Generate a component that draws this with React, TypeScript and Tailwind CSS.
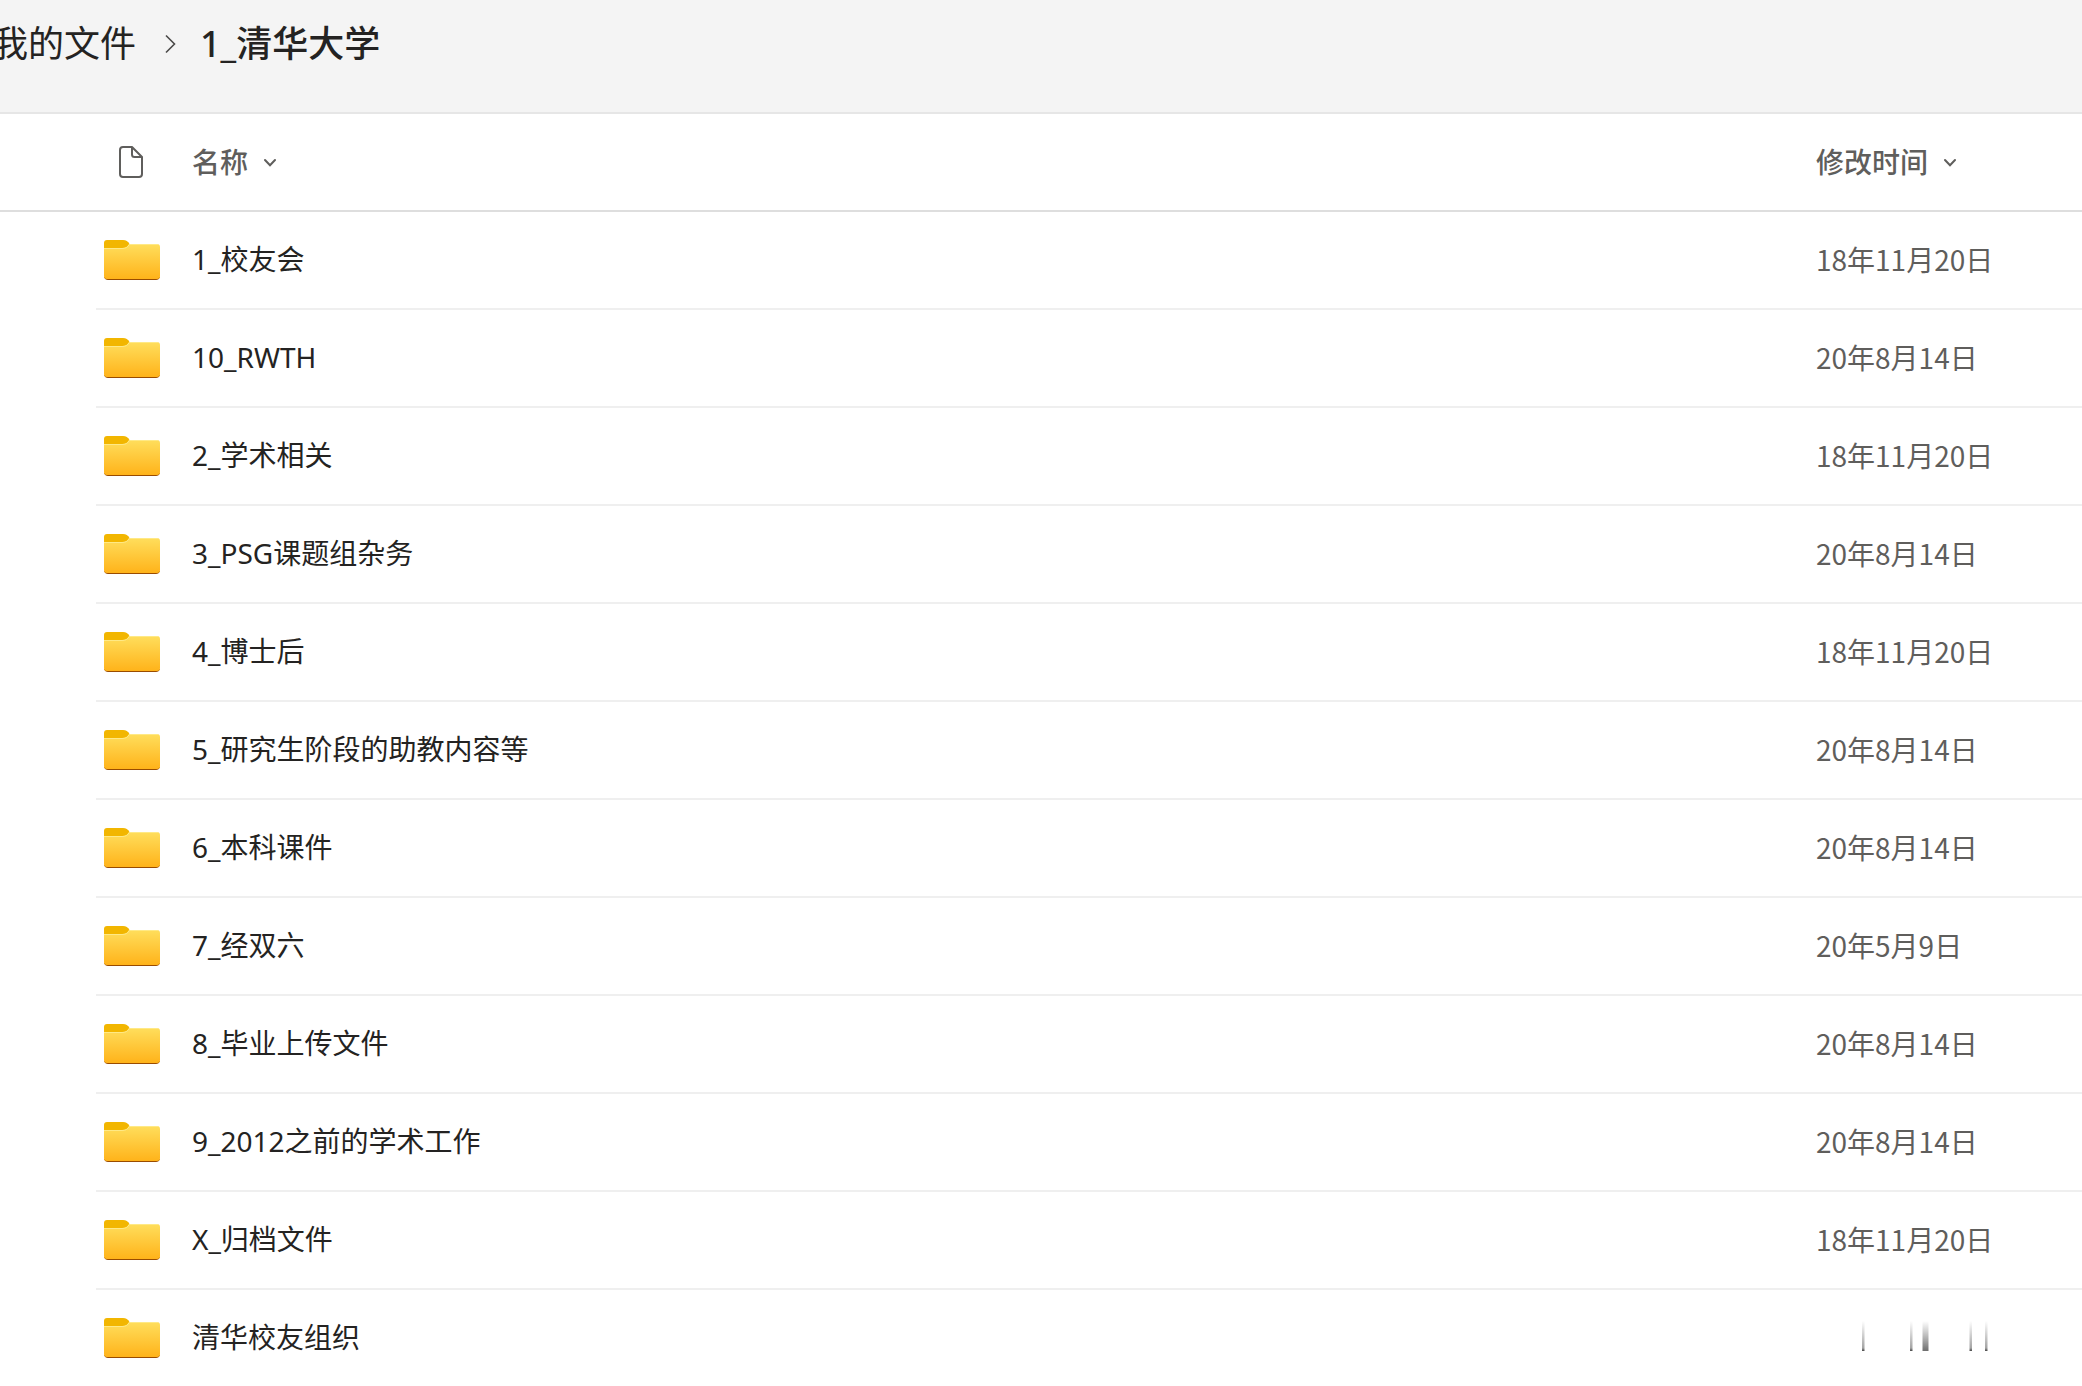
import React from 'react';

interface FolderItem {
  name: string;
  modified: string | null;
}

const folders: FolderItem[] = [
  { name: '1_校友会', modified: '18年11月20日' },
  { name: '10_RWTH', modified: '20年8月14日' },
  { name: '2_学术相关', modified: '18年11月20日' },
  { name: '3_PSG课题组杂务', modified: '20年8月14日' },
  { name: '4_博士后', modified: '18年11月20日' },
  { name: '5_研究生阶段的助教内容等', modified: '20年8月14日' },
  { name: '6_本科课件', modified: '20年8月14日' },
  { name: '7_经双六', modified: '20年5月9日' },
  { name: '8_毕业上传文件', modified: '20年8月14日' },
  { name: '9_2012之前的学术工作', modified: '20年8月14日' },
  { name: 'X_归档文件', modified: '18年11月20日' },
  { name: '清华校友组织', modified: null }
];

const FolderIcon: React.FC = () => {
  return <svg className="block h-10 w-14" viewBox="0 0 56 40" aria-hidden="true">
      <defs>
        <linearGradient id="folder-front" x1="0" y1="0" x2="0" y2="1">
          <stop offset="0" stopColor="#ffde5c" />
          <stop offset="1" stopColor="#ffb31a" />
        </linearGradient>
      </defs>
      <path d="M3 0H19C22 0 24 1.5 25.5 4L22 10H0V3Q0 0 3 0Z" fill="#f2b600" />
      <path d="M4 40Q1 40 0 37H56Q55 40 52 40Z" fill="#9a4c00" />
      <path d="M0 8H18C21 8 23 7.300 25 4H53Q56 4 56 7V36Q56 39 53 39H3Q0 39 0 36Z" fill="url(#folder-front)" />
      <path d="M0 8.500H18C21.500 8.500 23.500 7.500 25.300 4.500H54" fill="none" stroke="#ffe985" strokeWidth="1" />
    </svg>;
};

const FileIcon: React.FC = () => {
  return <svg className="mx-auto block h-8 w-6" viewBox="0 0 24 32" fill="none" stroke="#5f5e5c" strokeWidth="2" strokeLinejoin="round" aria-hidden="true">
      <path d="M4 1H13L23 11V28Q23 31 20 31H4Q1 31 1 28V4Q1 1 4 1Z" />
      <path d="M13 1V8.500Q13 11 15.500 11H23" />
    </svg>;
};

const ChevronDown: React.FC = () => {
  return <svg className="h-2.5 w-3" viewBox="0 0 12 10" fill="none" stroke="#5f5e5c" strokeWidth="2" strokeLinecap="round" aria-hidden="true">
      <path d="M1 3L6 8.200L11 3" />
    </svg>;
};

// Vertical strokes left where the last date is faded out
const FadedDate: React.FC = () => {
  return <svg className="block h-8 w-44" viewBox="0 0 176 32" aria-hidden="true">
      <defs>
        <linearGradient id="fade" x1="0" y1="0" x2="0" y2="1">
          <stop offset="0" stopColor="#666" stopOpacity="0" />
          <stop offset="0.900" stopColor="#666" stopOpacity="0.600" />
          <stop offset="1" stopColor="#444" stopOpacity="1" />
        </linearGradient>
        <linearGradient id="fade-wide" x1="0" y1="0" x2="0" y2="1">
          <stop offset="0" stopColor="#777" stopOpacity="0" />
          <stop offset="1" stopColor="#666" stopOpacity="0.950" />
        </linearGradient>
      </defs>
      <g fill="url(#fade)">
        <rect x="46" y="0" width="2.500" height="30" />
        <rect x="94" y="0" width="2.500" height="30" />
        <rect x="153.500" y="0" width="2.500" height="30" />
        <rect x="169" y="0" width="2.500" height="30" />
      </g>
      <rect x="106.500" y="0" width="6" height="30" fill="url(#fade-wide)" />
    </svg>;
};

const App: React.FC = () => {
  return <div className="min-h-screen bg-white font-['Noto_Sans','Noto_Sans_CJK_SC',sans-serif] text-[#242322]">
      <header className="overflow-hidden border-b-2 border-[#e6e6e6] bg-[#f4f4f4] pt-3.5 pb-[38px]">
        <nav aria-label="路径" className="-ml-2 flex h-15 items-center text-4xl">
          <a href="#" className="whitespace-nowrap">我的文件</a>
          <svg className="mr-6 ml-7 h-5 w-3" viewBox="0 0 12 20" fill="none" stroke="#4a4948" strokeWidth="1.600" aria-hidden="true">
            <path d="M2 1.500L10.500 10L2 18.500" />
          </svg>
          <span className="font-medium whitespace-nowrap" aria-current="page">1_清华大学</span>
        </nav>
      </header>
      <table className="w-full table-fixed border-separate border-spacing-0 text-[28px] leading-10">
        <colgroup>
          <col className="w-24" />
          <col className="w-24" />
          <col />
          <col className="w-[266px]" />
        </colgroup>
        <thead className="text-[#5f5e5c]">
          <tr>
            <td className="h-[98px] border-b-2 border-[#dedede]"></td>
            <th scope="col" aria-label="类型" className="border-b-2 border-[#dedede] pr-[26px]">
              <FileIcon />
            </th>
            <th scope="col" className="border-b-2 border-[#dedede] text-left">
              <button type="button" className="flex items-center gap-4 font-medium">
                名称
                <ChevronDown />
              </button>
            </th>
            <th scope="col" className="border-b-2 border-[#dedede] text-left">
              <button type="button" className="flex items-center gap-4 font-medium">
                修改时间
                <ChevronDown />
              </button>
            </th>
          </tr>
        </thead>
        <tbody>
          {folders.map(folder => <tr key={folder.name} className="group">
              <td></td>
              <td className="h-[98px] border-b-2 border-[#efefef] pl-2 group-last:h-24 group-last:border-b-0">
                <FolderIcon />
              </td>
              <td className="border-b-2 border-[#efefef] pb-0.5 group-last:border-b-0">
                <a href="#" className="whitespace-nowrap">{folder.name}</a>
              </td>
              <td className="border-b-2 border-[#efefef] pb-0.5 font-['Noto_Sans_CJK_SC',sans-serif] whitespace-nowrap text-[#5f5e5c] group-last:border-b-0">
                {folder.modified ?? <FadedDate />}
              </td>
            </tr>)}
        </tbody>
      </table>
    </div>;
};
export default App;
